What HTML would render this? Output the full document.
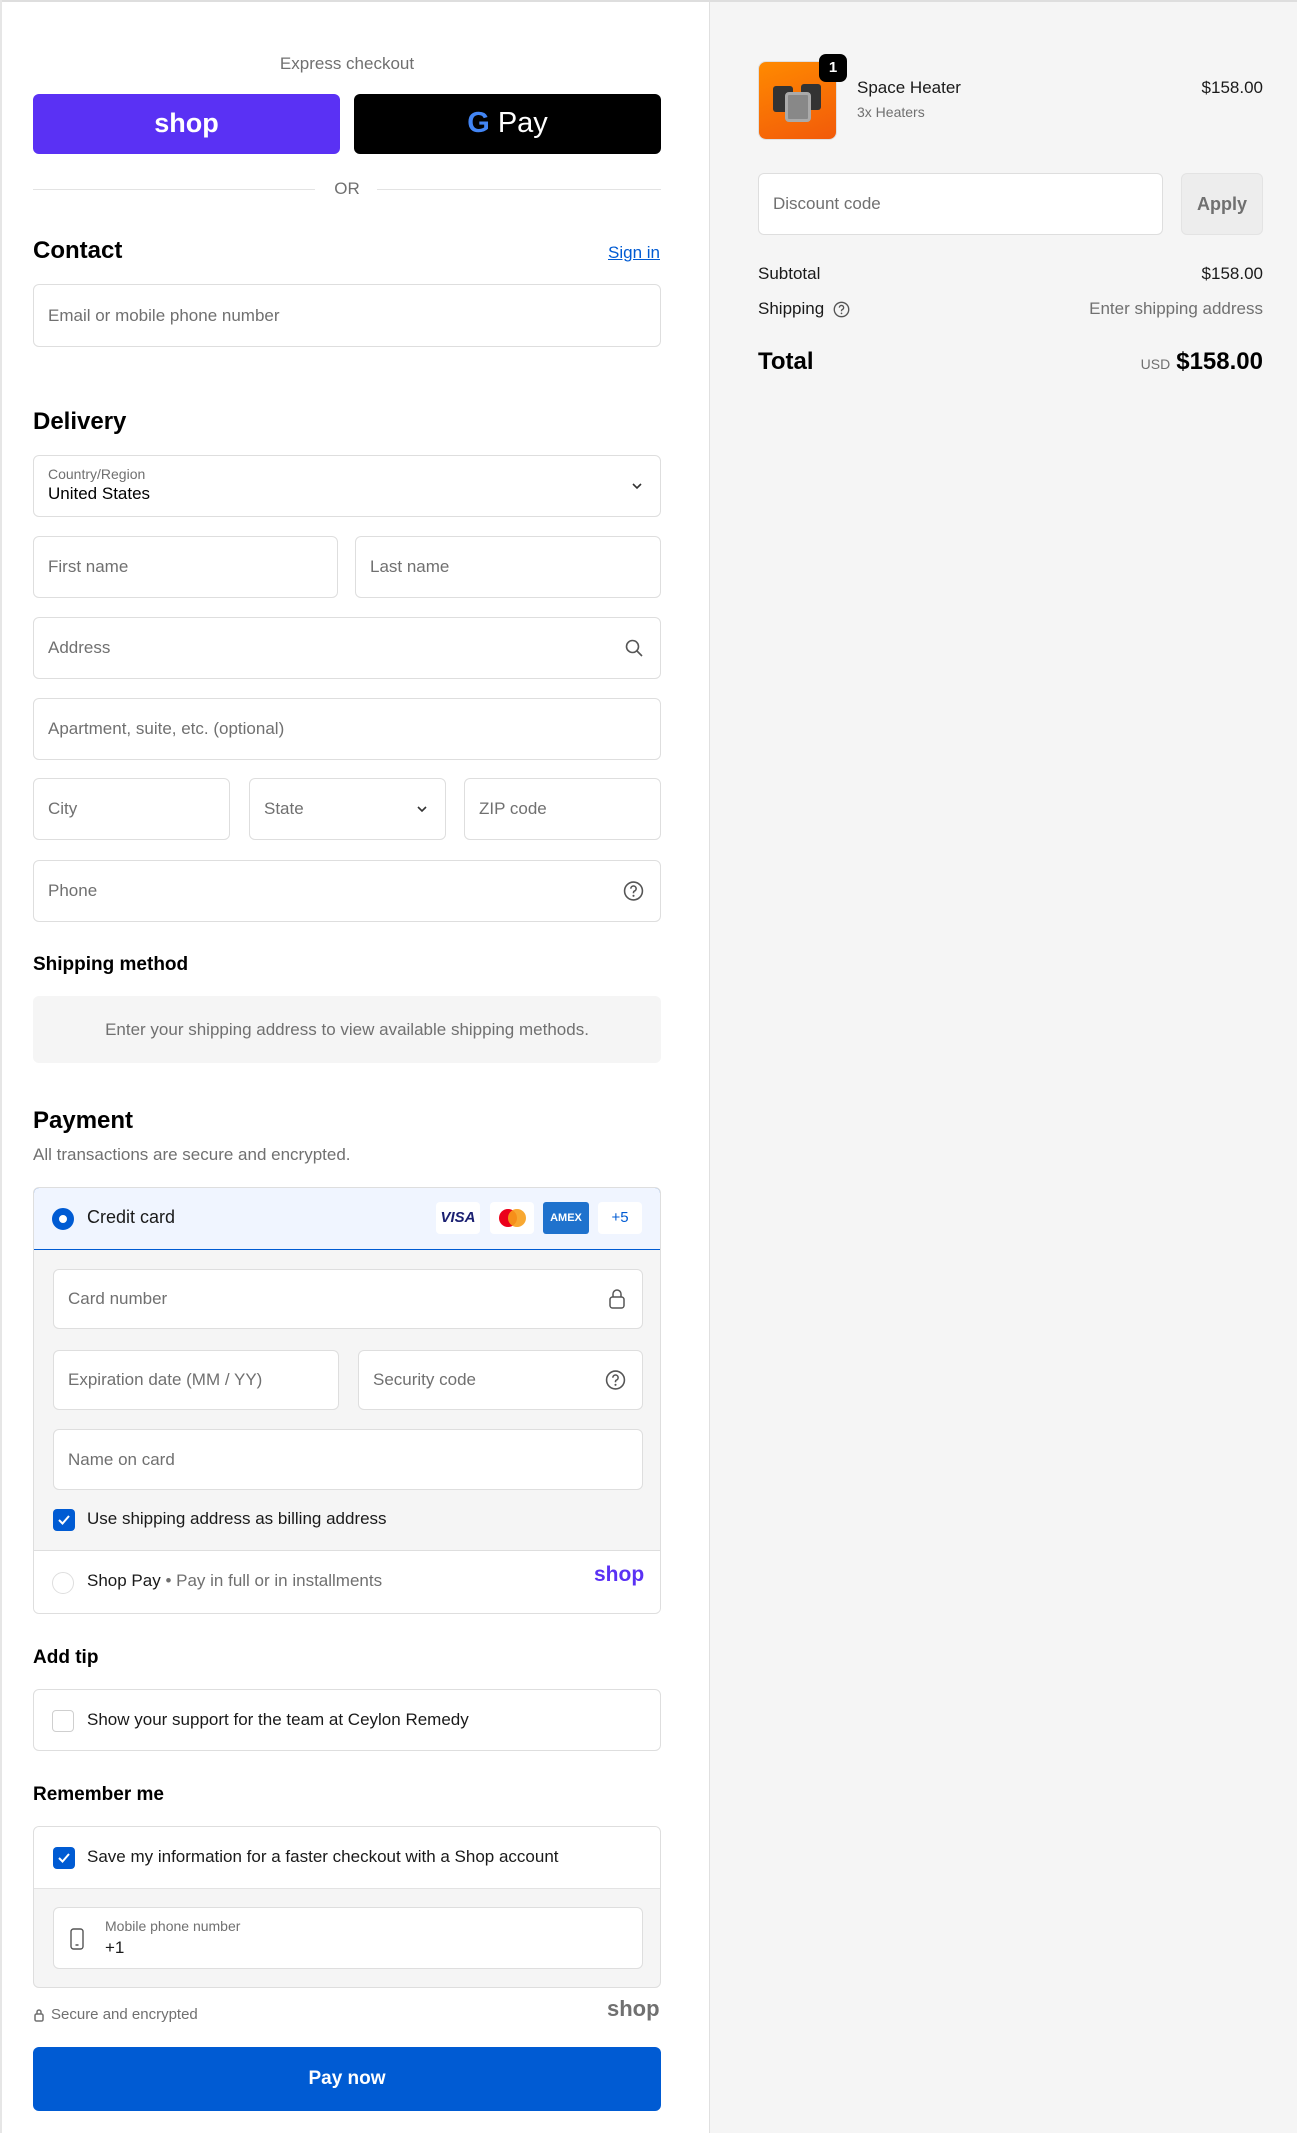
<!DOCTYPE html>
<html><head><meta charset="utf-8"><style>
*{box-sizing:border-box;margin:0;padding:0}
body{width:1297px;height:2133px;position:relative;background:#fff;font-family:"Liberation Sans",Arial,sans-serif;color:#1a1a1a;overflow:hidden}
.a{position:absolute}
.top{left:0;top:0;width:1297px;height:2px;background:#dedede}
.lb{left:0;top:0;width:2px;height:2133px;background:#e6e6e6}
.rp{left:709px;top:2px;width:588px;height:2131px;background:#f5f5f5;border-left:1px solid #e0e0e0}
.in{position:absolute;border:1px solid #dedede;border-radius:6px;background:#fff;font-size:17px;color:#707070;padding-left:14px;display:flex;align-items:center}
h2{position:absolute;font-size:24px;font-weight:bold;color:#000}
h3{position:absolute;font-size:19px;font-weight:bold;color:#000}
.ic{position:absolute;right:16px;top:50%;transform:translateY(-50%)}
.cb{position:absolute;width:22px;height:22px;border-radius:4px;background:#005bd3;}
.cb svg{position:absolute;left:4px;top:5px}
</style></head><body>
<div class="a top"></div><div class="a lb"></div>
<div class="a rp"></div>

<div class="a" style="left:33px;top:54px;width:628px;text-align:center;font-size:17px;color:#707070">Express checkout</div>
<div class="a" style="left:33px;top:94px;width:307px;height:60px;background:#5a31f4;border-radius:6px;color:#fff;font-size:27px;font-weight:bold;text-align:center;line-height:58px">shop</div>
<div class="a" style="left:354px;top:94px;width:307px;height:60px;background:#000;border-radius:6px;color:#fff;font-size:29px;text-align:center;line-height:58px"><span style="font-weight:bold;color:#4285f4">G</span> Pay</div>
<div class="a" style="left:33px;top:189px;width:282px;height:1px;background:#e3e3e3"></div>
<div class="a" style="left:377px;top:189px;width:284px;height:1px;background:#e3e3e3"></div>
<div class="a" style="left:33px;top:179px;width:628px;text-align:center;font-size:17px;color:#707070">OR</div>

<h2 style="left:33px;top:237px">Contact</h2>
<div class="a" style="left:608px;top:243px;font-size:17px;color:#005bd3;text-decoration:underline">Sign in</div>
<div class="in" style="left:33px;top:284px;width:628px;height:63px">Email or mobile phone number</div>

<h2 style="left:33px;top:408px">Delivery</h2>
<div class="in" style="left:33px;top:455px;width:628px;height:62px;display:block;padding-top:10px"><div style="font-size:14px;color:#707070">Country/Region</div><div style="font-size:17px;color:#000;margin-top:2px">United States</div>
<svg class="ic" width="14" height="14" viewBox="0 0 14 14"><path d="M3 5l4 4 4-4" fill="none" stroke="#333" stroke-width="1.6"/></svg></div>
<div class="in" style="left:33px;top:536px;width:305px;height:62px">First name</div>
<div class="in" style="left:355px;top:536px;width:306px;height:62px">Last name</div>
<div class="in" style="left:33px;top:617px;width:628px;height:62px">Address<svg class="ic" width="20" height="20" viewBox="0 0 20 20"><circle cx="8.5" cy="8.5" r="6" fill="none" stroke="#555" stroke-width="1.6"/><path d="M13 13l5 5" stroke="#555" stroke-width="1.6"/></svg></div>
<div class="in" style="left:33px;top:698px;width:628px;height:62px">Apartment, suite, etc. (optional)</div>
<div class="in" style="left:33px;top:778px;width:197px;height:62px">City</div>
<div class="in" style="left:249px;top:778px;width:197px;height:62px">State<svg class="ic" width="14" height="14" viewBox="0 0 14 14"><path d="M3 5l4 4 4-4" fill="none" stroke="#333" stroke-width="1.6"/></svg></div>
<div class="in" style="left:464px;top:778px;width:197px;height:62px">ZIP code</div>
<div class="in" style="left:33px;top:860px;width:628px;height:62px">Phone<svg class="ic" width="21" height="21" viewBox="0 0 20 20"><circle cx="10" cy="10" r="8.5" fill="none" stroke="#555" stroke-width="1.5"/><path d="M7.5 7.8a2.5 2.5 0 1 1 3.3 2.3c-.6.3-.8.7-.8 1.4v.6" fill="none" stroke="#555" stroke-width="1.5"/><circle cx="10" cy="14.6" r="1" fill="#555"/></svg></div>

<h3 style="left:33px;top:954px">Shipping method</h3>
<div class="a" style="left:33px;top:996px;width:628px;height:67px;background:#f5f5f5;border-radius:6px;text-align:center;line-height:67px;font-size:17px;color:#707070">Enter your shipping address to view available shipping methods.</div>

<h2 style="left:33px;top:1107px">Payment</h2>
<div class="a" style="left:33px;top:1145px;font-size:17px;color:#707070">All transactions are secure and encrypted.</div>
<div class="a" style="left:33px;top:1187px;width:628px;height:427px;border:1px solid #dedede;border-radius:6px;background:#f5f5f5;overflow:hidden">
 <div class="a" style="left:-1px;top:-1px;width:628px;height:63px;background:#f0f5ff;border:1.5px solid #005bd3;border-radius:6px 6px 0 0"></div>
 <div class="a" style="left:18px;top:20px;width:22px;height:22px;border-radius:50%;border:7px solid #005bd3;background:#fff"></div>
 <div class="a" style="left:53px;top:19px;font-size:18px;color:#1a1a1a">Credit card</div>
 <div class="a" style="left:402px;top:14px;width:44px;height:32px;background:#fff;border-radius:4px;font:italic bold 15px 'Liberation Sans';color:#1a1f71;text-align:center;line-height:32px">VISA</div>
 <div class="a" style="left:456px;top:14px;width:44px;height:32px;background:#fff;border-radius:4px"><div class="a" style="left:9px;top:7px;width:18px;height:18px;border-radius:50%;background:#eb001b"></div><div class="a" style="left:18px;top:7px;width:18px;height:18px;border-radius:50%;background:#f79e1b;opacity:.9"></div></div>
 <div class="a" style="left:509px;top:14px;width:46px;height:32px;background:#1f72cd;border-radius:3px;color:#fff;font:bold 11px 'Liberation Sans';text-align:center;line-height:32px">AMEX</div>
 <div class="a" style="left:564px;top:14px;width:44px;height:32px;background:#fff;border-radius:4px;color:#005bd3;font-size:15px;text-align:center;line-height:32px">+5</div>
 <div class="in" style="left:19px;top:81px;width:590px;height:60px">Card number<svg class="ic" width="18" height="22" viewBox="0 0 18 22"><rect x="2" y="9" width="14" height="11" rx="2.5" fill="none" stroke="#555" stroke-width="1.5"/><path d="M5 9V6a4 4 0 0 1 8 0v3" fill="none" stroke="#555" stroke-width="1.5"/></svg></div>
 <div class="in" style="left:19px;top:162px;width:286px;height:60px">Expiration date (MM / YY)</div>
 <div class="in" style="left:324px;top:162px;width:285px;height:60px">Security code<svg class="ic" width="21" height="21" viewBox="0 0 20 20"><circle cx="10" cy="10" r="8.5" fill="none" stroke="#555" stroke-width="1.5"/><path d="M7.5 7.8a2.5 2.5 0 1 1 3.3 2.3c-.6.3-.8.7-.8 1.4v.6" fill="none" stroke="#555" stroke-width="1.5"/><circle cx="10" cy="14.6" r="1" fill="#555"/></svg></div>
 <div class="in" style="left:19px;top:241px;width:590px;height:61px">Name on card</div>
 <div class="cb" style="left:19px;top:321px"><svg width="14" height="12" viewBox="0 0 14 12"><path d="M2 6l3.5 3.5L12 2" fill="none" stroke="#fff" stroke-width="2"/></svg></div>
 <div class="a" style="left:53px;top:321px;font-size:17px;color:#1a1a1a">Use shipping address as billing address</div>
 <div class="a" style="left:-1px;top:362px;width:628px;height:64px;background:#fff;border-top:1px solid #dedede"></div>
 <div class="a" style="left:18px;top:384px;width:22px;height:22px;border-radius:50%;border:1px solid #dedede;background:#fff"></div>
 <div class="a" style="left:53px;top:383px;font-size:17px;color:#1a1a1a">Shop Pay <span style="color:#707070">• Pay in full or in installments</span></div>
 <div class="a" style="left:560px;top:375px;font-size:21px;font-weight:bold;color:#5a31f4">shop</div>
</div>

<h3 style="left:33px;top:1647px">Add tip</h3>
<div class="in" style="left:33px;top:1689px;width:628px;height:62px;padding-left:53px;color:#1a1a1a"><div class="a" style="left:18px;top:20px;width:22px;height:22px;border:1px solid #cfcfcf;border-radius:4px"></div>Show your support for the team at Ceylon Remedy</div>

<h3 style="left:33px;top:1784px">Remember me</h3>
<div class="a" style="left:33px;top:1826px;width:628px;height:162px;border:1px solid #dedede;border-radius:6px;background:#f5f5f5;overflow:hidden">
 <div class="a" style="left:-1px;top:-1px;width:628px;height:63px;background:#fff;border-bottom:1px solid #e3e3e3"></div>
 <div class="cb" style="left:19px;top:20px"><svg width="14" height="12" viewBox="0 0 14 12"><path d="M2 6l3.5 3.5L12 2" fill="none" stroke="#fff" stroke-width="2"/></svg></div>
 <div class="a" style="left:53px;top:20px;font-size:17px;color:#1a1a1a">Save my information for a faster checkout with a Shop account</div>
 <div class="a" style="left:19px;top:80px;width:590px;height:62px;background:#fff;border:1px solid #dedede;border-radius:6px">
  <svg class="a" style="left:16px;top:20px" width="14" height="22" viewBox="0 0 14 22"><rect x="1" y="1" width="12" height="20" rx="2.5" fill="none" stroke="#555" stroke-width="1.4"/><path d="M5.5 17h3" stroke="#555" stroke-width="1.4"/></svg>
  <div class="a" style="left:51px;top:10px;font-size:14px;color:#707070">Mobile phone number</div>
  <div class="a" style="left:51px;top:30px;font-size:17px;color:#1a1a1a">+1</div>
 </div>
</div>
<svg class="a" style="left:34px;top:2008px" width="10" height="14" viewBox="0 0 10 14"><rect x="1" y="6" width="8" height="7" rx="1.5" fill="none" stroke="#707070" stroke-width="1.5"/><path d="M3 6V4a2 2 0 0 1 4 0v2" fill="none" stroke="#707070" stroke-width="1.5"/></svg>
<div class="a" style="left:51px;top:2006px;font-size:15px;color:#707070">Secure and encrypted</div>
<div class="a" style="left:607px;top:1996px;font-size:22px;font-weight:bold;color:#707070">shop</div>
<div class="a" style="left:33px;top:2047px;width:628px;height:64px;background:#005bd3;border-radius:6px;color:#fff;font-size:19px;font-weight:bold;text-align:center;line-height:64px">Pay now</div>

<!-- right -->
<div class="a" style="left:758px;top:61px;width:79px;height:79px;border-radius:8px;background:linear-gradient(160deg,#ff8a00,#f25a0a);border:1px solid #e0e0e0;overflow:hidden">
 <div class="a" style="left:14px;top:24px;width:20px;height:26px;background:#333;border-radius:3px"></div>
 <div class="a" style="left:42px;top:22px;width:20px;height:26px;background:#333;border-radius:3px"></div>
 <div class="a" style="left:26px;top:30px;width:26px;height:30px;background:#888;border-radius:4px;border:3px solid #aaa"></div>
</div>
<div class="a" style="left:819px;top:54px;width:28px;height:28px;border-radius:7px;background:#000;color:#fff;font-size:15px;font-weight:bold;text-align:center;line-height:28px">1</div>
<div class="a" style="left:857px;top:78px;font-size:17px;color:#1a1a1a">Space Heater</div>
<div class="a" style="left:857px;top:104px;font-size:14px;color:#707070">3x Heaters</div>
<div class="a" style="left:1100px;top:78px;width:163px;text-align:right;font-size:17px;color:#1a1a1a">$158.00</div>
<div class="in" style="left:758px;top:173px;width:405px;height:62px">Discount code</div>
<div class="a" style="left:1181px;top:173px;width:82px;height:62px;border:1px solid #e3e3e3;border-radius:6px;background:#ededed;color:#707070;font-size:18px;font-weight:bold;text-align:center;line-height:60px">Apply</div>
<div class="a" style="left:758px;top:264px;font-size:17px;color:#1a1a1a">Subtotal</div>
<div class="a" style="left:1100px;top:264px;width:163px;text-align:right;font-size:17px;color:#1a1a1a">$158.00</div>
<div class="a" style="left:758px;top:299px;font-size:17px;color:#1a1a1a">Shipping</div>
<svg class="a" style="left:833px;top:301px" width="17" height="17" viewBox="0 0 20 20"><circle cx="10" cy="10" r="8.5" fill="none" stroke="#555" stroke-width="1.6"/><path d="M7.5 7.8a2.5 2.5 0 1 1 3.3 2.3c-.6.3-.8.7-.8 1.4v.6" fill="none" stroke="#555" stroke-width="1.6"/><circle cx="10" cy="14.6" r="1" fill="#555"/></svg>
<div class="a" style="left:1000px;top:299px;width:263px;text-align:right;font-size:17px;color:#707070">Enter shipping address</div>
<div class="a" style="left:758px;top:348px;font-size:24px;font-weight:bold;color:#000">Total</div>
<div class="a" style="left:1000px;top:348px;width:263px;text-align:right;font-size:24px;font-weight:bold;color:#000"><span style="font-size:14px;font-weight:normal;color:#707070;margin-right:6px">USD</span>$158.00</div>
</body></html>
